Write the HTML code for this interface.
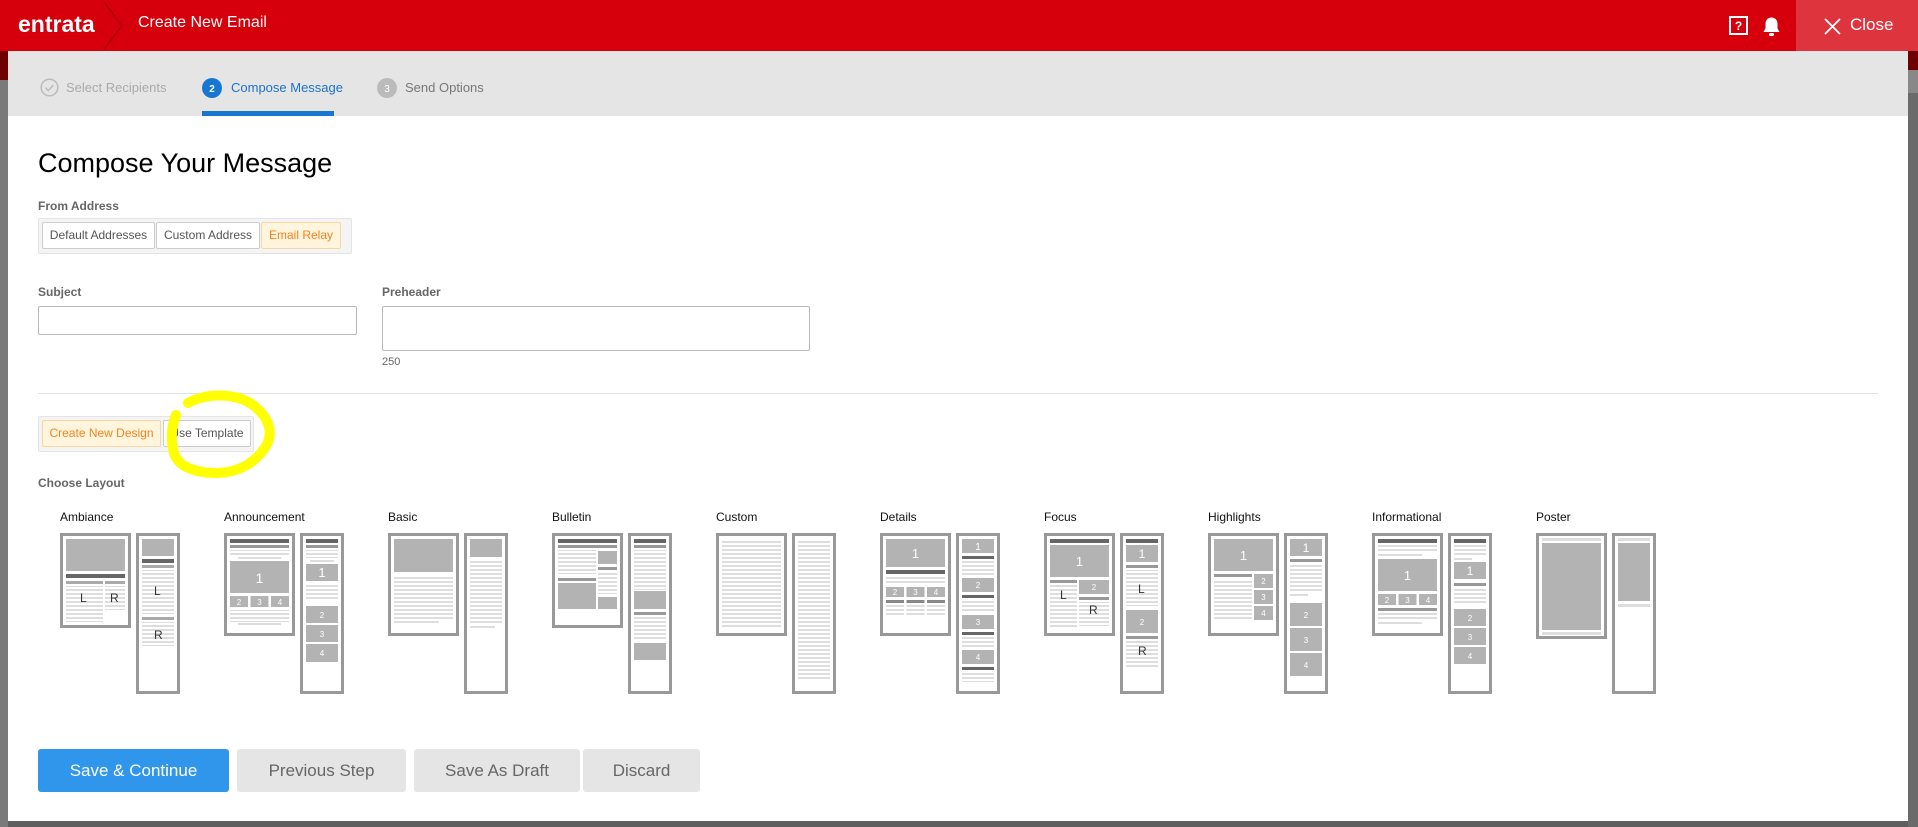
<!DOCTYPE html>
<html><head><meta charset="utf-8">
<style>
*{margin:0;padding:0;box-sizing:border-box}
body{width:1918px;height:827px;overflow:hidden;background:#5e5e5e;font-family:"Liberation Sans",Arial,sans-serif;position:relative}
.a{position:absolute}
.hdr{left:0;top:0;width:1918px;height:51px;background:#d5000b}
.modal{left:8px;top:51px;width:1900px;height:770px;background:#fff}
.lbl{font-size:12px;font-weight:bold;color:#666}
.seg{border:1px solid #e4e4e4;background:#f4f4f4;border-radius:2px}
.btn{position:absolute;border:1px solid #ccc;background:#fff;font-size:12px;color:#555;text-align:center;line-height:25px;border-radius:2px}
.btn.on{background:#fff4dc;border-color:#f3d7a4;color:#f7821b}
.inp{border:1px solid #b8b8b8;border-radius:2px;background:#fff}
.ln{font-size:12px;color:#111}
.fb{position:absolute;top:698px;height:43px;border-radius:3px;font-size:17px;text-align:center;line-height:43px;background:#e5e5e5;color:#666}
svg text{font-family:"Liberation Sans",Arial,sans-serif}
</style></head><body>
<svg width="0" height="0" style="position:absolute"><defs>
<pattern id="ln" width="4" height="4" patternUnits="userSpaceOnUse"><rect width="4" height="2" fill="#ddd"/></pattern>
</defs></svg>

<div class="a" style="left:0;top:51px;width:8px;height:29px;background:#6e0000"></div>
<div class="a" style="left:0;top:80px;width:8px;height:747px;background:#7a7a7a"></div>
<div class="a" style="left:1908px;top:51px;width:10px;height:19px;background:#6e0000"></div>
<div class="a" style="left:1908px;top:70px;width:10px;height:23px;background:#888"></div>
<div class="a" style="left:1908px;top:93px;width:10px;height:734px;background:#6a6a6a"></div>

<div class="a hdr">
  <div class="a" style="left:18px;top:11px;color:#fff;font-size:23px;font-weight:bold">entrata</div>
  <svg class="a" style="left:100px;top:0" width="26" height="51"><path d="M4 2 L22 26 L4 49" stroke="#b00008" stroke-width="1.5" fill="none"/></svg>
  <div class="a" style="left:138px;top:14px;color:#fff;font-size:16px">Create New Email</div>
  <svg class="a" style="left:1729px;top:16px" width="19" height="19"><rect x="1" y="1" width="17" height="17" fill="none" stroke="#fff" stroke-width="2"/><text x="9.5" y="14" font-size="12" font-weight="bold" fill="#fff" text-anchor="middle">?</text></svg>
  <svg class="a" style="left:1762px;top:16px" width="19" height="21"><path d="M9.5 1.5c-3.5 0-6 2.6-6 6.3v4.6L1.5 16h16l-2-3.6V7.8c0-3.7-2.5-6.3-6-6.3z" fill="#fff"/><rect x="7" y="17" width="5" height="3" rx="1.5" fill="#fff"/></svg>
  <div class="a" style="left:1796px;top:0;width:122px;height:51px;background:#dd343e">
    <svg class="a" style="left:28px;top:18px" width="17" height="17"><path d="M1 1L16 16M16 1L1 16" stroke="#fff" stroke-width="1.8"/></svg>
    <div class="a" style="left:54px;top:15px;color:#fff;font-size:17px">Close</div>
  </div>
</div>

<div class="a modal">
  <div class="a" style="left:0;top:0;width:1900px;height:65px;background:#e5e5e5"></div>
  <svg class="a" style="left:32px;top:27px" width="19" height="19"><circle cx="9.5" cy="9.5" r="8.3" fill="none" stroke="#bbb" stroke-width="1.5"/><path d="M5.5 9.8l2.8 2.8 5-5.5" stroke="#bbb" stroke-width="1.5" fill="none"/></svg>
  <div class="a" style="left:58px;top:29px;font-size:13px;color:#aaa">Select Recipients</div>
  <svg class="a" style="left:194px;top:27px" width="20" height="20"><circle cx="10" cy="10" r="10" fill="#1677d2"/><text x="10" y="14" font-size="10" font-weight="bold" fill="#fff" text-anchor="middle">2</text></svg>
  <div class="a" style="left:223px;top:29px;font-size:13px;color:#1a73c9">Compose Message</div>
  <div class="a" style="left:194px;top:60px;width:132px;height:5px;background:#1677d2"></div>
  <svg class="a" style="left:369px;top:27px" width="20" height="20"><circle cx="10" cy="10" r="10" fill="#bbb"/><text x="10" y="14" font-size="10" fill="#fff" text-anchor="middle">3</text></svg>
  <div class="a" style="left:397px;top:29px;font-size:13px;color:#777">Send Options</div>

  <div class="a" style="left:30px;top:97px;font-size:27px;color:#000">Compose Your Message</div>
  <div class="a lbl" style="left:30px;top:148px">From Address</div>
  <div class="a seg" style="left:30px;top:167px;width:314px;height:36px"></div>
  <div class="btn" style="left:34px;top:171px;width:113px;height:27px">Default Addresses</div>
  <div class="btn" style="left:148px;top:171px;width:104px;height:27px">Custom Address</div>
  <div class="btn on" style="left:253px;top:171px;width:80px;height:27px">Email Relay</div>

  <div class="a lbl" style="left:30px;top:234px">Subject</div>
  <div class="a inp" style="left:30px;top:255px;width:319px;height:29px"></div>
  <div class="a lbl" style="left:374px;top:234px">Preheader</div>
  <div class="a inp" style="left:374px;top:255px;width:428px;height:45px"></div>
  <div class="a" style="left:374px;top:305px;font-size:11px;color:#666">250</div>

  <div class="a" style="left:30px;top:342px;width:1840px;height:1px;background:#e2e2e2"></div>

  <div class="a seg" style="left:30px;top:365px;width:216px;height:36px"></div>
  <div class="btn on" style="left:34px;top:369px;width:119px;height:27px">Create New Design</div>
  <div class="btn" style="left:155px;top:369px;width:88px;height:27px">Use Template</div>
  <svg class="a" style="left:150px;top:338px" width="130" height="95"><path d="M30 14 C48 4 75 4 92 14 C110 26 118 44 106 60 C96 74 80 84 58 84 C38 84 20 78 16 64 C12 50 14 36 18 26" fill="none" stroke="#ffff00" stroke-width="10" stroke-linecap="round"/></svg>

  <div class="a lbl" style="left:30px;top:425px">Choose Layout</div>

  <div class="a ln" style="left:52px;top:459px">Ambiance</div>
  <svg class="a" style="left:52px;top:482px" width="71" height="95"><rect x="1.5" y="1.5" width="68" height="92" fill="#fff" stroke="#999" stroke-width="3"/><rect x="6" y="6" width="59" height="32" fill="#b3b3b3"/><rect x="6" y="41" width="59" height="4" fill="#666"/><rect x="6" y="48" width="37" height="3" fill="#aaa"/><rect x="45" y="48" width="20" height="3" fill="#aaa"/><rect x="6" y="53" width="37" height="36" fill="url(#ln)"/><rect x="45" y="53" width="20" height="24" fill="url(#ln)"/><text x="20" y="69" font-size="12" fill="#333">L</text><text x="50" y="69" font-size="12" fill="#333">R</text></svg>
  <svg class="a" style="left:128px;top:482px" width="44" height="161"><rect x="1.5" y="1.5" width="41" height="158" fill="#fff" stroke="#999" stroke-width="3"/><rect x="6" y="6" width="32" height="17" fill="#b3b3b3"/><rect x="6" y="26" width="32" height="4" fill="#666"/><rect x="6" y="32" width="32" height="3" fill="#aaa"/><rect x="6" y="37" width="32" height="44" fill="url(#ln)"/><rect x="6" y="84" width="32" height="3" fill="#aaa"/><rect x="6" y="89" width="32" height="24" fill="url(#ln)"/><text x="18" y="62" font-size="12" fill="#333">L</text><text x="18" y="106" font-size="12" fill="#333">R</text></svg>

  <div class="a ln" style="left:216px;top:459px">Announcement</div>
  <svg class="a" style="left:216px;top:482px" width="71" height="103"><rect x="1.5" y="1.5" width="68" height="100" fill="#fff" stroke="#999" stroke-width="3"/><rect x="6" y="6" width="59" height="4" fill="#666"/><rect x="6" y="12" width="59" height="3" fill="#999"/><rect x="6" y="17" width="59" height="6" fill="url(#ln)"/><rect x="14" y="24" width="43" height="2" fill="#ddd"/><rect x="6" y="28" width="59" height="32" fill="#b3b3b3"/><text x="35.5" y="50" font-size="14" fill="#fff" text-anchor="middle">1</text><rect x="6" y="63" width="18" height="11" fill="#b3b3b3"/><rect x="26.5" y="63" width="18" height="11" fill="#b3b3b3"/><rect x="47" y="63" width="18" height="11" fill="#b3b3b3"/><text x="15" y="72" font-size="8" fill="#fff" text-anchor="middle">2</text><text x="35.5" y="72" font-size="8" fill="#fff" text-anchor="middle">3</text><text x="56" y="72" font-size="8" fill="#fff" text-anchor="middle">4</text><rect x="6" y="77" width="59" height="12" fill="url(#ln)"/><rect x="14" y="90" width="43" height="2" fill="#ddd"/></svg>
  <svg class="a" style="left:292px;top:482px" width="44" height="161"><rect x="1.5" y="1.5" width="41" height="158" fill="#fff" stroke="#999" stroke-width="3"/><rect x="6" y="6" width="32" height="4" fill="#666"/><rect x="6" y="12" width="32" height="3" fill="#999"/><rect x="6" y="17" width="32" height="8" fill="url(#ln)"/><rect x="10" y="27" width="24" height="2" fill="#ddd"/><rect x="6" y="31" width="32" height="17" fill="#b3b3b3"/><text x="22" y="44" font-size="13" fill="#fff" text-anchor="middle">1</text><rect x="6" y="52" width="32" height="16" fill="url(#ln)"/><rect x="6" y="73" width="32" height="17" fill="#b3b3b3"/><rect x="6" y="92" width="32" height="17" fill="#b3b3b3"/><rect x="6" y="111" width="32" height="18" fill="#b3b3b3"/><text x="22" y="85" font-size="8" fill="#fff" text-anchor="middle">2</text><text x="22" y="104" font-size="8" fill="#fff" text-anchor="middle">3</text><text x="22" y="123" font-size="8" fill="#fff" text-anchor="middle">4</text></svg>

  <div class="a ln" style="left:380px;top:459px">Basic</div>
  <svg class="a" style="left:380px;top:482px" width="71" height="103"><rect x="1.5" y="1.5" width="68" height="100" fill="#fff" stroke="#999" stroke-width="3"/><rect x="6" y="6" width="59" height="33" fill="#b3b3b3"/><rect x="6" y="42" width="59" height="44" fill="url(#ln)"/><rect x="6" y="88" width="45" height="2" fill="#ddd"/></svg>
  <svg class="a" style="left:456px;top:482px" width="44" height="161"><rect x="1.5" y="1.5" width="41" height="158" fill="#fff" stroke="#999" stroke-width="3"/><rect x="6" y="6" width="32" height="18" fill="#b3b3b3"/><rect x="6" y="27" width="32" height="64" fill="url(#ln)"/><rect x="6" y="93" width="25" height="2" fill="#ddd"/></svg>

  <div class="a ln" style="left:544px;top:459px">Bulletin</div>
  <svg class="a" style="left:544px;top:482px" width="71" height="95"><rect x="1.5" y="1.5" width="68" height="92" fill="#fff" stroke="#999" stroke-width="3"/><rect x="6" y="6" width="59" height="4" fill="#666"/><rect x="6" y="12" width="59" height="3" fill="#999"/><rect x="6" y="17" width="38" height="24" fill="url(#ln)"/><rect x="46" y="18" width="19" height="13" fill="#b3b3b3"/><rect x="46" y="34" width="19" height="3" fill="#999"/><rect x="46" y="39" width="19" height="22" fill="url(#ln)"/><rect x="6" y="45" width="38" height="3" fill="#999"/><rect x="6" y="50" width="38" height="26" fill="#b3b3b3"/><rect x="46" y="64" width="19" height="12" fill="#b3b3b3"/></svg>
  <svg class="a" style="left:620px;top:482px" width="44" height="161"><rect x="1.5" y="1.5" width="41" height="158" fill="#fff" stroke="#999" stroke-width="3"/><rect x="6" y="6" width="32" height="4" fill="#666"/><rect x="6" y="12" width="32" height="3" fill="#999"/><rect x="6" y="17" width="32" height="40" fill="url(#ln)"/><rect x="6" y="58" width="32" height="18" fill="#b3b3b3"/><rect x="6" y="79" width="32" height="3" fill="#999"/><rect x="6" y="84" width="32" height="24" fill="url(#ln)"/><rect x="6" y="110" width="32" height="17" fill="#b3b3b3"/></svg>

  <div class="a ln" style="left:708px;top:459px">Custom</div>
  <svg class="a" style="left:708px;top:482px" width="71" height="103"><rect x="1.5" y="1.5" width="68" height="100" fill="#fff" stroke="#999" stroke-width="3"/><rect x="6" y="6" width="59" height="88" fill="url(#ln)"/></svg>
  <svg class="a" style="left:784px;top:482px" width="44" height="161"><rect x="1.5" y="1.5" width="41" height="158" fill="#fff" stroke="#999" stroke-width="3"/><rect x="6" y="6" width="32" height="140" fill="url(#ln)"/></svg>

  <div class="a ln" style="left:872px;top:459px">Details</div>
  <svg class="a" style="left:872px;top:482px" width="71" height="103"><rect x="1.5" y="1.5" width="68" height="100" fill="#fff" stroke="#999" stroke-width="3"/><rect x="6" y="6" width="59" height="28" fill="#b3b3b3"/><text x="35.5" y="25" font-size="13" fill="#fff" text-anchor="middle">1</text><rect x="6" y="37" width="59" height="4" fill="#666"/><rect x="6" y="43" width="59" height="8" fill="url(#ln)"/><rect x="6" y="54" width="18" height="10" fill="#b3b3b3"/><rect x="26.5" y="54" width="18" height="10" fill="#b3b3b3"/><rect x="47" y="54" width="18" height="10" fill="#b3b3b3"/><text x="15" y="62" font-size="8" fill="#fff" text-anchor="middle">2</text><text x="35.5" y="62" font-size="8" fill="#fff" text-anchor="middle">3</text><text x="56" y="62" font-size="8" fill="#fff" text-anchor="middle">4</text><rect x="6" y="67" width="18" height="3" fill="#888"/><rect x="26.5" y="67" width="18" height="3" fill="#888"/><rect x="47" y="67" width="18" height="3" fill="#888"/><rect x="6" y="72" width="18" height="10" fill="url(#ln)"/><rect x="26.5" y="72" width="18" height="10" fill="url(#ln)"/><rect x="47" y="72" width="18" height="10" fill="url(#ln)"/></svg>
  <svg class="a" style="left:948px;top:482px" width="44" height="161"><rect x="1.5" y="1.5" width="41" height="158" fill="#fff" stroke="#999" stroke-width="3"/><rect x="6" y="6" width="32" height="14" fill="#b3b3b3"/><text x="22" y="17" font-size="10" fill="#fff" text-anchor="middle">1</text><rect x="6" y="23" width="32" height="3" fill="#666"/><rect x="6" y="28" width="32" height="14" fill="url(#ln)"/><rect x="6" y="45" width="32" height="14" fill="#b3b3b3"/><text x="22" y="55" font-size="8" fill="#fff" text-anchor="middle">2</text><rect x="6" y="62" width="32" height="3" fill="#666"/><rect x="6" y="67" width="32" height="12" fill="url(#ln)"/><rect x="6" y="82" width="32" height="14" fill="#b3b3b3"/><text x="22" y="92" font-size="8" fill="#fff" text-anchor="middle">3</text><rect x="6" y="99" width="32" height="3" fill="#666"/><rect x="6" y="104" width="32" height="10" fill="url(#ln)"/><rect x="6" y="117" width="32" height="14" fill="#b3b3b3"/><text x="22" y="127" font-size="8" fill="#fff" text-anchor="middle">4</text><rect x="6" y="134" width="32" height="3" fill="#666"/><rect x="6" y="139" width="32" height="10" fill="url(#ln)"/></svg>

  <div class="a ln" style="left:1036px;top:459px">Focus</div>
  <svg class="a" style="left:1036px;top:482px" width="71" height="103"><rect x="1.5" y="1.5" width="68" height="100" fill="#fff" stroke="#999" stroke-width="3"/><rect x="6" y="6" width="59" height="4" fill="#666"/><rect x="6" y="12" width="59" height="32" fill="#b3b3b3"/><text x="35.5" y="33" font-size="13" fill="#fff" text-anchor="middle">1</text><rect x="6" y="47" width="27" height="3" fill="#999"/><rect x="6" y="52" width="27" height="44" fill="url(#ln)"/><rect x="35" y="47" width="30" height="14" fill="#b3b3b3"/><text x="50" y="57" font-size="8" fill="#fff" text-anchor="middle">2</text><rect x="35" y="64" width="30" height="3" fill="#999"/><rect x="35" y="69" width="30" height="24" fill="url(#ln)"/><text x="16" y="66" font-size="12" fill="#333">L</text><text x="45" y="81" font-size="12" fill="#333">R</text></svg>
  <svg class="a" style="left:1112px;top:482px" width="44" height="161"><rect x="1.5" y="1.5" width="41" height="158" fill="#fff" stroke="#999" stroke-width="3"/><rect x="6" y="6" width="32" height="4" fill="#666"/><rect x="6" y="12" width="32" height="17" fill="#b3b3b3"/><text x="22" y="25" font-size="12" fill="#fff" text-anchor="middle">1</text><rect x="6" y="32" width="32" height="3" fill="#999"/><rect x="6" y="37" width="32" height="36" fill="url(#ln)"/><rect x="6" y="77" width="32" height="23" fill="#b3b3b3"/><text x="22" y="92" font-size="8" fill="#fff" text-anchor="middle">2</text><rect x="6" y="103" width="32" height="3" fill="#999"/><rect x="6" y="108" width="32" height="28" fill="url(#ln)"/><text x="18" y="60" font-size="12" fill="#333">L</text><text x="18" y="122" font-size="12" fill="#333">R</text></svg>

  <div class="a ln" style="left:1200px;top:459px">Highlights</div>
  <svg class="a" style="left:1200px;top:482px" width="71" height="103"><rect x="1.5" y="1.5" width="68" height="100" fill="#fff" stroke="#999" stroke-width="3"/><rect x="6" y="6" width="59" height="32" fill="#b3b3b3"/><text x="35.5" y="27" font-size="13" fill="#fff" text-anchor="middle">1</text><rect x="6" y="41" width="38" height="3" fill="#999"/><rect x="6" y="46" width="38" height="40" fill="url(#ln)"/><rect x="46" y="41" width="19" height="14" fill="#b3b3b3"/><rect x="46" y="57" width="19" height="14" fill="#b3b3b3"/><rect x="46" y="73" width="19" height="14" fill="#b3b3b3"/><text x="55.5" y="51" font-size="8" fill="#fff" text-anchor="middle">2</text><text x="55.5" y="67" font-size="8" fill="#fff" text-anchor="middle">3</text><text x="55.5" y="83" font-size="8" fill="#fff" text-anchor="middle">4</text></svg>
  <svg class="a" style="left:1276px;top:482px" width="44" height="161"><rect x="1.5" y="1.5" width="41" height="158" fill="#fff" stroke="#999" stroke-width="3"/><rect x="6" y="6" width="32" height="17" fill="#b3b3b3"/><text x="22" y="19" font-size="12" fill="#fff" text-anchor="middle">1</text><rect x="6" y="26" width="32" height="3" fill="#999"/><rect x="6" y="31" width="32" height="28" fill="url(#ln)"/><rect x="6" y="61" width="18" height="2" fill="#ddd"/><rect x="6" y="70" width="32" height="23" fill="#b3b3b3"/><rect x="6" y="95" width="32" height="23" fill="#b3b3b3"/><rect x="6" y="120" width="32" height="23" fill="#b3b3b3"/><text x="22" y="85" font-size="8" fill="#fff" text-anchor="middle">2</text><text x="22" y="110" font-size="8" fill="#fff" text-anchor="middle">3</text><text x="22" y="135" font-size="8" fill="#fff" text-anchor="middle">4</text></svg>

  <div class="a ln" style="left:1364px;top:459px">Informational</div>
  <svg class="a" style="left:1364px;top:482px" width="71" height="103"><rect x="1.5" y="1.5" width="68" height="100" fill="#fff" stroke="#999" stroke-width="3"/><rect x="6" y="6" width="59" height="4" fill="#666"/><rect x="6" y="12" width="59" height="8" fill="url(#ln)"/><rect x="6" y="21" width="44" height="2" fill="#ddd"/><rect x="6" y="26" width="59" height="32" fill="#b3b3b3"/><text x="35.5" y="47" font-size="13" fill="#fff" text-anchor="middle">1</text><rect x="6" y="61" width="18" height="11" fill="#b3b3b3"/><rect x="26.5" y="61" width="18" height="11" fill="#b3b3b3"/><rect x="47" y="61" width="18" height="11" fill="#b3b3b3"/><text x="15" y="70" font-size="8" fill="#fff" text-anchor="middle">2</text><text x="35.5" y="70" font-size="8" fill="#fff" text-anchor="middle">3</text><text x="56" y="70" font-size="8" fill="#fff" text-anchor="middle">4</text><rect x="6" y="75" width="59" height="3" fill="#999"/><rect x="6" y="80" width="59" height="8" fill="url(#ln)"/><rect x="6" y="89" width="44" height="2" fill="#ddd"/></svg>
  <svg class="a" style="left:1440px;top:482px" width="44" height="161"><rect x="1.5" y="1.5" width="41" height="158" fill="#fff" stroke="#999" stroke-width="3"/><rect x="6" y="6" width="32" height="4" fill="#666"/><rect x="6" y="12" width="32" height="12" fill="url(#ln)"/><rect x="6" y="25" width="18" height="2" fill="#ddd"/><rect x="6" y="29" width="32" height="17" fill="#b3b3b3"/><text x="22" y="42" font-size="12" fill="#fff" text-anchor="middle">1</text><rect x="6" y="50" width="32" height="3" fill="#999"/><rect x="6" y="55" width="32" height="16" fill="url(#ln)"/><rect x="6" y="76" width="32" height="17" fill="#b3b3b3"/><rect x="6" y="95" width="32" height="17" fill="#b3b3b3"/><rect x="6" y="114" width="32" height="17" fill="#b3b3b3"/><text x="22" y="88" font-size="8" fill="#fff" text-anchor="middle">2</text><text x="22" y="107" font-size="8" fill="#fff" text-anchor="middle">3</text><text x="22" y="126" font-size="8" fill="#fff" text-anchor="middle">4</text></svg>

  <div class="a ln" style="left:1528px;top:459px">Poster</div>
  <svg class="a" style="left:1528px;top:482px" width="71" height="106"><rect x="1.5" y="1.5" width="68" height="103" fill="#fff" stroke="#999" stroke-width="3"/><rect x="6" y="5" width="59" height="3" fill="#ddd"/><rect x="6" y="10" width="59" height="87" fill="#b3b3b3"/><rect x="6" y="99" width="59" height="3" fill="#ddd"/></svg>
  <svg class="a" style="left:1604px;top:482px" width="44" height="161"><rect x="1.5" y="1.5" width="41" height="158" fill="#fff" stroke="#999" stroke-width="3"/><rect x="6" y="5" width="32" height="3" fill="#ddd"/><rect x="6" y="10" width="32" height="58" fill="#b3b3b3"/><rect x="6" y="71" width="32" height="3" fill="#ddd"/></svg>

  <div class="fb" style="left:30px;width:191px;background:#2f96ec;color:#fff">Save &amp; Continue</div>
  <div class="fb" style="left:229px;width:169px">Previous Step</div>
  <div class="fb" style="left:406px;width:166px">Save As Draft</div>
  <div class="fb" style="left:575px;width:117px">Discard</div>
</div>
</body></html>
